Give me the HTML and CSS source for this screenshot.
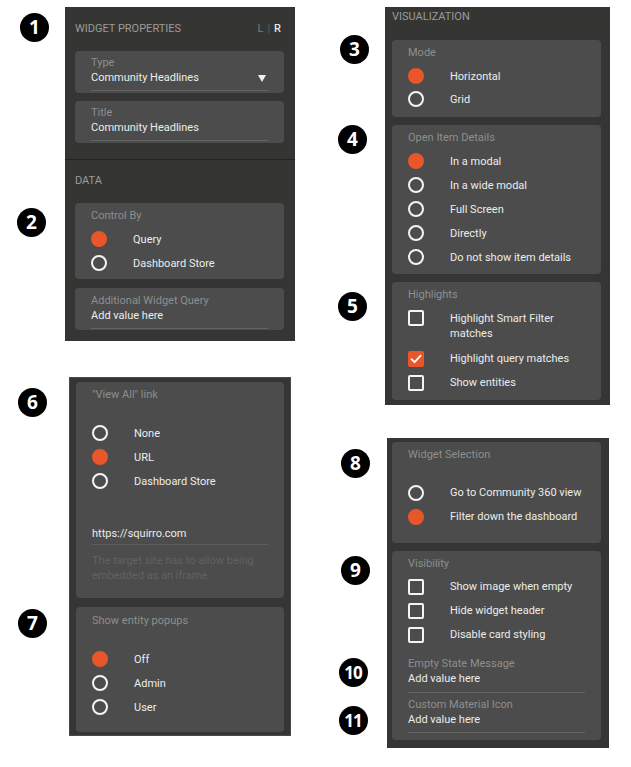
FILE: index.html
```html
<!DOCTYPE html>
<html lang="en">
<head>
<meta charset="utf-8">
<title>Widget properties</title>
<link rel="stylesheet" href="styles.css">
</head>
<body>
<div class="page">
  <div class="col col-left">
    <section class="panel p1">
      <span class="badge b1">1</span>
      <span class="badge b2">2</span>
      <div class="phead head-p1"><span>WIDGET PROPERTIES</span><span class="lr"><span class="lr-l">L</span><span class="lr-sep">|</span><span class="lr-r">R</span></span></div>
      <div class="card field">
        <div class="cap">Type</div>
        <div class="val val-select"><span>Community Headlines</span><span class="caret"></span></div>
        <div class="uline"></div>
      </div>
      <div class="card field gap8">
        <div class="cap">Title</div>
        <div class="val">Community Headlines</div>
        <div class="uline"></div>
      </div>
      <div class="divider"></div>
      <div class="phead head-data">DATA</div>
      <div class="card opts pb4">
        <div class="cap">Control By</div>
        <ul class="list">
          <li class="row"><span class="radio on"></span><span class="lbl">Query</span></li>
          <li class="row"><span class="radio"></span><span class="lbl">Dashboard Store</span></li>
        </ul>
      </div>
      <div class="card field field-b gap9">
        <div class="cap">Additional Widget Query</div>
        <div class="val">Add value here</div>
        <div class="uline"></div>
      </div>
    </section>

    <section class="panel p3">
      <span class="badge b6">6</span>
      <span class="badge b7">7</span>
      <div class="card opts viewall">
        <div class="cap">"View All" link</div>
        <ul class="list spaced">
          <li class="row"><span class="radio"></span><span class="lbl">None</span></li>
          <li class="row"><span class="radio on"></span><span class="lbl">URL</span></li>
          <li class="row"><span class="radio"></span><span class="lbl">Dashboard Store</span></li>
        </ul>
        <div class="url">https://squirro.com</div>
        <div class="uline url-line"></div>
        <div class="help">The target site has to allow being embedded as an iframe.</div>
      </div>
      <div class="card opts popups gap9">
        <div class="cap">Show entity popups</div>
        <ul class="list spaced">
          <li class="row"><span class="radio on"></span><span class="lbl">Off</span></li>
          <li class="row"><span class="radio"></span><span class="lbl">Admin</span></li>
          <li class="row"><span class="radio"></span><span class="lbl">User</span></li>
        </ul>
      </div>
    </section>
  </div>

  <div class="col col-right">
    <section class="panel p2">
      <span class="badge b3">3</span>
      <span class="badge b4">4</span>
      <span class="badge b5">5</span>
      <div class="phead head-p2">VISUALIZATION</div>
      <div class="card opts pb6">
        <div class="cap">Mode</div>
        <ul class="list">
          <li class="row"><span class="radio on"></span><span class="lbl">Horizontal</span></li>
          <li class="row tight"><span class="radio"></span><span class="lbl">Grid</span></li>
        </ul>
      </div>
      <div class="card opts pb5 gap8">
        <div class="cap">Open Item Details</div>
        <ul class="list">
          <li class="row"><span class="radio on"></span><span class="lbl">In a modal</span></li>
          <li class="row"><span class="radio"></span><span class="lbl">In a wide modal</span></li>
          <li class="row"><span class="radio"></span><span class="lbl">Full Screen</span></li>
          <li class="row"><span class="radio"></span><span class="lbl">Directly</span></li>
          <li class="row"><span class="radio"></span><span class="lbl">Do not show item details</span></li>
        </ul>
      </div>
      <div class="card opts pb5 gap8">
        <div class="cap">Highlights</div>
        <ul class="list">
          <li class="row wrap"><span class="check"></span><span class="lbl">Highlight Smart Filter matches</span></li>
          <li class="row"><span class="check on"><svg viewBox="0 0 16 16" width="16" height="16"><path d="M3.5 8.2 L6.6 11.2 L12.6 4.6" fill="none" stroke="#fff" stroke-width="1.8" stroke-linecap="round" stroke-linejoin="round"/></svg></span><span class="lbl">Highlight query matches</span></li>
          <li class="row"><span class="check"></span><span class="lbl">Show entities</span></li>
        </ul>
      </div>
    </section>

    <section class="panel p4">
      <span class="badge b8">8</span>
      <span class="badge b9">9</span>
      <span class="badge b10 two">10</span>
      <span class="badge b11 two">11</span>
      <div class="card opts wsel">
        <div class="cap">Widget Selection</div>
        <ul class="list spaced">
          <li class="row"><span class="radio"></span><span class="lbl">Go to Community 360 view</span></li>
          <li class="row"><span class="radio on"></span><span class="lbl">Filter down the dashboard</span></li>
        </ul>
      </div>
      <div class="card opts vis gap8">
        <div class="cap">Visibility</div>
        <ul class="list">
          <li class="row"><span class="check"></span><span class="lbl">Show image when empty</span></li>
          <li class="row"><span class="check"></span><span class="lbl">Hide widget header</span></li>
          <li class="row"><span class="check"></span><span class="lbl">Disable card styling</span></li>
        </ul>
        <div class="subfield sf1">
          <div class="cap">Empty State Message</div>
          <div class="val">Add value here</div>
          <div class="uline ul6"></div>
        </div>
        <div class="subfield sf2">
          <div class="cap">Custom Material Icon</div>
          <div class="val">Add value here</div>
          <div class="uline"></div>
        </div>
      </div>
    </section>
  </div>
</div>
</body>
</html>
```

FILE: styles.css
```css
* { box-sizing: border-box; margin: 0; padding: 0; }

html, body { background: #ffffff; }

body {
  font-family: Roboto, "Liberation Sans", sans-serif;
  font-size: 11px;
  color: #e6e6e6;
}

.page {
  display: flex;
  align-items: flex-start;
  width: 631px;
  height: 767px;
  overflow: hidden;
}

.col { display: flex; flex-direction: column; align-items: flex-start; }
.col-left { width: 295px; padding-top: 7px; }
.col-right { padding-top: 7px; }

.panel { position: relative; background: #353533; }

.p1 { margin-left: 65px; width: 230px; padding: 0 11px 11px 10px; }
.p3 { margin-top: 36px; margin-left: 69px; width: 222px; padding: 4px 6px 3px 6px; border: 1px solid #4a4a48; }
.p2 { margin-left: 90px; width: 225px; padding: 0 9px 5px 7px; }
.p4 { margin-top: 33px; margin-left: 92px; width: 222px; padding: 4px 8px 8px 5px; }

.phead {
  line-height: 14px;
  font-size: 11px;
  color: #9b9b9a;
  text-transform: uppercase;
}
.head-p1 { padding-top: 15px; margin-bottom: 15px; display: flex; justify-content: space-between; padding-right: 3px; }
.head-data { margin-top: 14px; margin-bottom: 15px; }
.head-p2 { padding-top: 3px; margin-bottom: 16px; }

.lr { display: flex; gap: 4px; }
.lr-l { color: #7c7c7b; }
.lr-sep { color: #5f5f5e; }
.lr-r { color: #e4e4e4; font-weight: 500; }

.divider { height: 1px; background: #232322; margin: 16px -11px 0 -10px; }

.card { background: #4b4c4b; border-radius: 4px; }
.gap8 { margin-top: 8px; }
.gap9 { margin-top: 9px; }

.cap { line-height: 14px; color: #8e8f8e; }
.val { line-height: 15px; color: #ececec; }

.field { padding: 5px 16px 2px; }
.field-b { padding: 6px 16px 1px; }
.uline { height: 1px; background: #626362; margin-top: 5px; }

.val-select { display: flex; justify-content: space-between; align-items: center; }
.caret {
  width: 0; height: 0;
  border-left: 4px solid transparent;
  border-right: 4px solid transparent;
  border-top: 7px solid #f2f2f2;
  margin-right: 2px;
  margin-top: 1px;
}

.opts { padding: 6px 16px 5px; }
.pb4 { padding-bottom: 4px; }
.pb5 { padding-bottom: 5px; }
.pb6 { padding-bottom: 6px; }

.list { list-style: none; margin-top: 4px; }
.list.spaced { margin-top: 19px; }

.row {
  display: flex;
  align-items: flex-start;
  gap: 26px;
  padding: 4.5px 0;
  line-height: 15px;
}
.row.tight { padding-top: 3.5px; }
.row.wrap { padding-bottom: 6px; }

.lbl { color: #ececec; flex: 1; }

.radio {
  flex: none;
  width: 16px; height: 16px;
  margin: -0.5px 0;
  border-radius: 50%;
  border: 2px solid #f4f4f4;
}
.radio.on { background: #e9562a; border-color: #e9562a; }

.check {
  flex: none;
  width: 16px; height: 16px;
  margin: -0.5px 0;
  border-radius: 2px;
  border: 2px solid #f4f4f4;
}
.check.on { background: #e9562a; border: none; }
.check svg { display: block; }

.viewall { padding-bottom: 15.5px; }
.url { margin-top: 32.5px; line-height: 15px; color: #ececec; }
.url-line { margin-top: 3.5px; background: #5d5e5d; }
.help { margin-top: 7.5px; line-height: 15px; color: #616261; }

.popups { padding-top: 7px; padding-bottom: 13px; }

.wsel { padding-bottom: 14px; }
.vis { padding-bottom: 7px; }
.subfield.sf1 { margin-top: 10px; }
.subfield.sf2 { margin-top: 5px; }
.ul6 { margin-top: 6px; }

.badge {
  position: absolute;
  width: 29px; height: 29px;
  border-radius: 50%;
  background: #000;
  color: #fff;
  font-family: "Open Sans", "DejaVu Sans", sans-serif;
  font-weight: 700;
  font-size: 19px;
  line-height: 29px;
  text-align: center;
}
.badge.two { font-size: 17px; letter-spacing: -1px; text-indent: -1px; }

.b1 { left: -45px; top: 6px; }
.b2 { left: -48px; top: 201px; }
.b3 { left: -45px; top: 28px; }
.b4 { left: -47px; top: 118px; }
.b5 { left: -47px; top: 285px; }
.b6 { left: -52px; top: 10px; }
.b7 { left: -52px; top: 231px; }
.b8 { left: -46px; top: 11px; }
.b9 { left: -46px; top: 118px; }
.b10 { left: -48px; top: 220px; }
.b11 { left: -48px; top: 268px; }
```
